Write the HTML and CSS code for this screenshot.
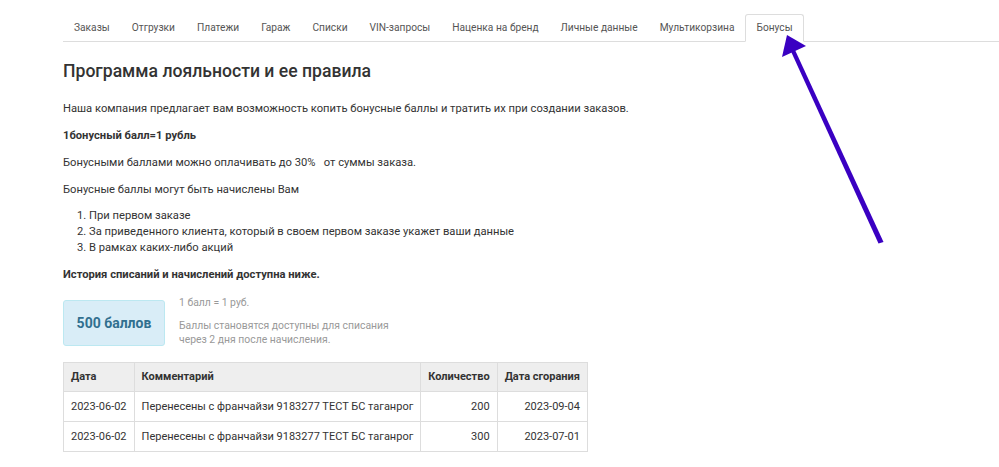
FILE: index.html
```html
<!DOCTYPE html>
<html lang="ru">

<head>
    <meta charset="UTF-8" />
    <meta name="viewport" content="width=device-width, initial-scale=1.0" />
    <title>Бонусы</title>
    <link rel="stylesheet" href="styles.css">
</head>

<body>
    <div class="page">
        <ul class="tabs">
            <li class="tab">Заказы</li>
            <li class="tab">Отгрузки</li>
            <li class="tab">Платежи</li>
            <li class="tab">Гараж</li>
            <li class="tab">Списки</li>
            <li class="tab">VIN-запросы</li>
            <li class="tab">Наценка на бренд</li>
            <li class="tab">Личные данные</li>
            <li class="tab">Мультикорзина</li>
            <li class="tab active">Бонусы</li>
        </ul>

        <div class="content">
            <h1 class="title">Программа лояльности и ее правила</h1>
            <p>Наша компания предлагает вам возможность копить бонусные баллы и тратить их при создании заказов.</p>
            <p><b>1бонусный балл=1 рубль</b></p>
            <p>Бонусными баллами можно оплачивать до 30% &nbsp; от суммы заказа.</p>
            <p>Бонусные баллы могут быть начислены Вам</p>
            <ol class="rules">
                <li>При первом заказе</li>
                <li>За приведенного клиента, который в своем первом заказе укажет ваши данные</li>
                <li>В рамках каких-либо акций</li>
            </ol>
            <p><b>История списаний и начислений доступна ниже.</b></p>

            <div class="balance">
                <div class="balance-box">500 баллов</div>
                <div class="balance-info">
                    <div class="rate">1 балл = 1 руб.</div>
                    <div>Баллы становятся доступны для списания<br>через 2 дня после начисления.</div>
                </div>
            </div>

            <table class="history">
                <tr>
                    <th>Дата</th>
                    <th>Комментарий</th>
                    <th class="num">Количество</th>
                    <th>Дата сгорания</th>
                </tr>
                <tr>
                    <td>2023-06-02</td>
                    <td>Перенесены с франчайзи 9183277 ТЕСТ БС таганрог</td>
                    <td class="num">200</td>
                    <td class="num">2023-09-04</td>
                </tr>
                <tr>
                    <td>2023-06-02</td>
                    <td>Перенесены с франчайзи 9183277 ТЕСТ БС таганрог</td>
                    <td class="num">300</td>
                    <td class="num">2023-07-01</td>
                </tr>
            </table>
        </div>
    </div>

    <!-- annotation arrow pointing at the active tab -->
    <svg class="arrow" width="999" height="467" viewBox="0 0 999 467">
        <polygon points="878.5,243.5 883.5,242 795,50 791,51.5" fill="#3a00c2" />
        <polygon points="787,35 782,57 806,46" fill="#3a00c2" />
    </svg>
</body>

</html>
```

FILE: styles.css
```css
body {
    margin: 0;
    font-family: Roboto, "Liberation Sans", Arial, sans-serif;
    font-size: 11.2px;
    color: #333;
    background: #fff;
}

.page {
    padding-left: 63px;
    padding-top: 14px;
}

.tabs {
    display: flex;
    list-style: none;
    margin: 0;
    padding: 0;
    border-bottom: 1px solid #ddd;
}

.tab {
    font-size: 10.2px;
    color: #555;
    padding: 6px 10px 7px;
    line-height: 13px;
    border: 1px solid transparent;
    border-radius: 3px 3px 0 0;
    margin-bottom: -1px;
}

.tab.active {
    background: #fff;
    border-color: #ddd #ddd #fff;
}

.content {
    padding-top: 17px;
}

.title {
    margin: 0 0 17px;
    font-size: 17.6px;
    font-weight: 500;
    line-height: 24px;
    color: #333;
}

.content p {
    margin: 0 0 10px;
    line-height: 17px;
}

.rules {
    margin: 0 0 10px;
    padding-left: 26px;
}

.rules li {
    line-height: 16px;
}

.balance {
    display: flex;
    align-items: flex-start;
    margin-top: 17px;
}

.balance-box {
    width: 100px;
    height: 44px;
    display: flex;
    align-items: center;
    justify-content: center;
    background: #d9edf7;
    border: 1px solid #bce8f1;
    border-radius: 3px;
    color: #31708f;
    font-size: 14px;
    font-weight: 700;
}

.balance-info {
    margin-left: 14px;
    margin-top: -4px;
    font-size: 10.4px;
    line-height: 14px;
    color: #999;
}

.balance-info .rate {
    margin-bottom: 9px;
}

.history {
    margin-top: 15px;
    border-collapse: collapse;
    font-size: 11px;
}

.history th,
.history td {
    border: 1px solid #ddd;
    padding: 7px 7px;
    line-height: 14px;
    text-align: left;
    white-space: nowrap;
}

.history th {
    background: #eee;
    font-weight: 700;
}

.history td {
    padding-top: 8px;
    padding-bottom: 7px;
}

.history .num {
    text-align: right;
}

.arrow {
    position: absolute;
    left: 0;
    top: 0;
    pointer-events: none;
}
```
